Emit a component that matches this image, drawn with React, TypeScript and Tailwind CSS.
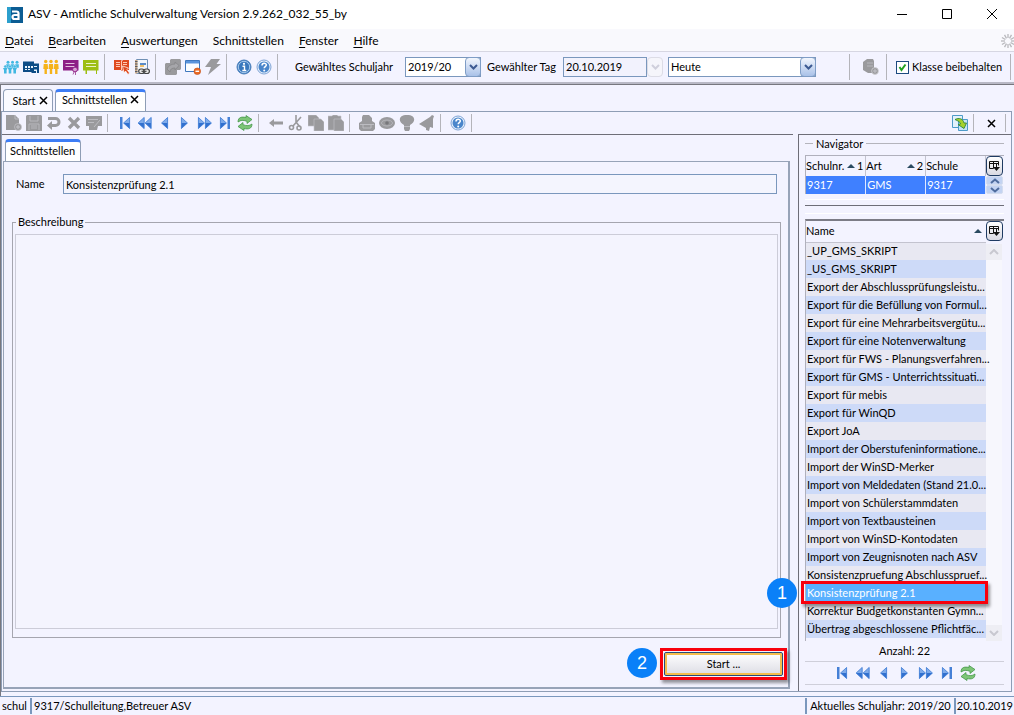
import React, { ReactNode } from 'react';

const GREY = '#9a9a9d';

function Svg({ children, w = 16 }: { children: ReactNode; w?: number }) {
  return (
    <svg width={w} height={16} viewBox={`0 0 ${w} 16`} className="block shrink-0" aria-hidden="true">
      {children}
    </svg>
  );
}

function Tool({ label, children }: { label: string; children: ReactNode }) {
  return (
    <button type="button" aria-label={label} className="block h-4 w-4 shrink-0">
      <Svg>{children}</Svg>
    </button>
  );
}

function Sep({ className = '' }: { className?: string }) {
  return <span className={`w-px shrink-0 self-stretch bg-[#b4b4ba] ${className}`} />;
}

const pupils = (
  <g fill="#42b8e2">
    {[5, 9.5, 14].map((x) => (
      <g key={x}>
        <circle cx={x} cy="3.300" r="1.500" />
        <path d={`M${x - 1.8} 5.300h3.600v3.500h-3.600z`} />
      </g>
    ))}
    {[2.3, 7, 11.7].map((x) => (
      <g key={x}>
        <circle cx={x} cy="7.500" r="1.500" stroke="#f3f3ff" strokeWidth=".4" />
        <path d={`M${x - 2.3} 9h4.600l-1 2v3.500h-2.600V11z`} />
      </g>
    ))}
  </g>
);

const school = (
  <g>
    <path d="M0 2.500h11v2h5v9.500H8.500v-1H0z" fill="#0d4c86" />
    <path d="M2 7h2v2H2zM5 7h2v2H5zM8 7h2v2H8zM11 7h3v1h-3zM2 10h2v1H2zM5 10h2v1H5zM11 10.500h3V14h-1v-2h-2z" fill="#e8f3fb" />
  </g>
);

const teachers = (
  <g fill="#f5b31a">
    {[2.7, 8, 13.3].map((x) => (
      <g key={x}>
        <circle cx={x} cy="2.500" r="1.700" />
        <path d={`M${x - 2} 5h4l.4 5h-1.200v5h-2.400v-5h-1.200z`} />
      </g>
    ))}
  </g>
);

const certificate = (
  <g>
    <path d="M0 1h15.500v10.500H0z" fill="#8d1f86" />
    <path d="M2.500 4.500h9M2.500 7.500h9" stroke="#e3bfe0" />
    <circle cx="12" cy="10.500" r="2.400" fill="#d9a5d5" stroke="#8d1f86" />
    <path d="M11 13l-1 2.500M12.500 13v3" stroke="#a95aa4" />
  </g>
);

const message = (
  <g>
    <path d="M0 1h15.500v10.500H14V15h-1v-3.500H4V15H2.500v-3.500H0z" fill="#9dbe12" />
    <path d="M3 4.500h10M3 7.500h10" stroke="#e9f2c4" />
  </g>
);

const redBook = (
  <g>
    <path d="M0 1h7l1 1 1-1h6v10H9l-1 1-1-1H0z" fill="#df4a20" />
    <path d="M2 3.500h4M2 5.500h4M2 7.500h4M9 3.500h4M9 5.500h4M7.500 2v9" stroke="#ffc8b4" />
    <path d="M8.500 7l6 2-1.500 1.500 2.500 3.500-1.500 1.500-2.500-3.500-1.500 2z" fill="#df4a20" stroke="#fff" strokeWidth=".7" />
  </g>
);

const report = (
  <g>
    <path d="M2.500.5h11v14h-11z" fill="#f2f6fc" stroke="#6f8fb4" />
    <path d="M1 1h2.500v13.500H1z" fill="#c9a98a" />
    <path d="M1 2.500h2.500M1 5h2.500M1 7.500h2.500M1 10h2.500M1 12.500h2.500" stroke="#555b66" />
    <path d="M6 4h6v2H6z" fill="#5a8cc8" />
    <path d="M6 6h4v2H6z" fill="#f1c06a" />
    <rect x="4.700" y="10" width="5.500" height="4.500" rx="2.200" fill="#e8e8e8" stroke="#444" strokeWidth="1.200" />
    <rect x="9.900" y="10" width="5.500" height="4.500" rx="2.200" fill="#e8e8e8" stroke="#444" strokeWidth="1.200" />
    <path d="M7.500 12.300h5" stroke="#444" strokeWidth="1.200" />
  </g>
);

const transferGrey = (
  <g fill={GREY}>
    <path d="M6 0h9l1 1v9l-1 1h-3v4l-1 1H1l-1-1V5l1-1h4V1z" />
    <path d="M2 10l3 3c0-3 2-4 5-4v2l4-4.500L10 3v2C6 5 3 7 2 10z" fill="#a6a6aa" stroke="#858588" strokeWidth=".8" />
  </g>
);

const windowMinus = (
  <g>
    <path d="M.5 1.500h14v11H.5z" fill="#fbfdff" stroke="#3f78be" />
    <path d="M1 2h13v2.500H1z" fill="#5a94dc" />
    <circle cx="12.300" cy="12.300" r="3.300" fill="#ea6a25" stroke="#c14a10" strokeWidth=".6" />
    <path d="M10.500 12.300h3.600" stroke="#fff" strokeWidth="1.400" />
  </g>
);

const bolt = <path d="M6 0h9l-3.500 5H16L3 16l3-8H0z" fill={GREY} />;

const info = (
  <g>
    <circle cx="8" cy="8" r="7" fill="#3a78bd" stroke="#4a7fbb" />
    <circle cx="8" cy="8" r="5.700" fill="none" stroke="#a9cbed" />
    <circle cx="8" cy="4.800" r="1.100" fill="#fff" />
    <path d="M6.500 7.300h2v4M6.300 11.500h4" stroke="#fff" strokeWidth="1.400" fill="none" />
  </g>
);

const help = (
  <g>
    <circle cx="8" cy="8" r="7" fill="#e9f2fc" stroke="#7fa4d6" />
    <circle cx="8" cy="8" r="5.500" fill="#4a86cb" />
    <path d="M6 6.500c0-3 4.300-2.800 4.300-.4C10.300 7.600 8.200 7.600 8.200 9.300" stroke="#fff" strokeWidth="1.500" fill="none" />
    <circle cx="8.200" cy="11.400" r="1" fill="#fff" />
  </g>
);

const docAdd = (
  <g fill={GREY}>
    <path d="M0 0h9l4 4v11H0z" />
    <path d="M9 0v4h4" stroke="#bcbcc1" fill="none" />
    <circle cx="12" cy="12" r="3.500" stroke="#c6c6cc" strokeWidth=".7" />
    <path d="M10 12h4M12 10v4" stroke="#c4c4ca" />
  </g>
);

const floppy = (
  <g>
    <path d="M1 0h14l1 1v15H0V1z" fill={GREY} />
    <path d="M4 1v5h8V1M3 15V9h10v6M5 11h6M5 13h6" stroke="#b8b8bd" fill="none" />
  </g>
);

const undo = (
  <g>
    <path d="M2 3.500h7.500a3.500 3.500 0 0 1 0 7H5" stroke={GREY} strokeWidth="3" fill="none" />
    <path d="M1 10.500L6 6v9z" fill={GREY} />
  </g>
);

const edit = (
  <g>
    <path d="M0 1h16v10h-4l-1 4H3v-4H0z" fill={GREY} />
    <path d="M2 4.500h10M2 7.500h6M8 12l6-7" stroke="#bcbcc1" />
  </g>
);

const triR = (x: number) => (
  <g>
    <path d={`M${x} 2v12l6.500-6z`} fill="#7fabea" />
    <path d={`M${x + 0.5} 8h6L${x + 0.5} 13.500z`} fill="#3170cf" />
    <path d={`M${x + 0.4} 2.500v11l6-5.500z`} fill="none" stroke="#4580d6" strokeWidth=".8" />
  </g>
);
const triL = (x: number) => (
  <g>
    <path d={`M${x} 2v12l-6.500-6z`} fill="#7fabea" />
    <path d={`M${x - 0.5} 8h-6l6 5.500z`} fill="#3170cf" />
    <path d={`M${x - 0.4} 2.500v11l-6-5.500z`} fill="none" stroke="#4580d6" strokeWidth=".8" />
  </g>
);

const refresh = (
  <g fill="#7cc576" stroke="#3b8f41" strokeWidth=".7">
    <path d="M1 7C1 2 5 1.500 9 2.500V.5l6 4-5 4V6.300C6 5 4 5 1 7z" />
    <path d="M15 9c0 5-4 5.500-8 4.500v2l-6-4 5-4v2.200c4 1.300 6 1.300 9-.7z" />
  </g>
);

const navIcons: [string, ReactNode][] = [
  ['Erster', <g><path d="M3 2h2.500v12H3z" fill="#4580d6" />{triL(13)}</g>],
  ['Schnell zurück', <g>{triL(7.500)}{triL(14.500)}</g>],
  ['Zurück', triL(11)],
  ['Weiter', triR(4)],
  ['Schnell vor', <g>{triR(1)}{triR(8)}</g>],
  ['Letzter', <g>{triR(3)}<path d="M10.500 2H13v12h-2.500z" fill="#4580d6" /></g>],
  ['Aktualisieren', refresh],
];

const clipIcons: [string, ReactNode][] = [
  ['Löschen', <path d="M1 8l5-4v2.500h9v3H6V12z" fill={GREY} />],
  ['Ausschneiden', (
    <g fill="none" stroke={GREY} strokeWidth="1.600">
      <path d="M8 0v7l4 5M13 2L5 11" />
      <circle cx="3.500" cy="12.500" r="2" />
      <circle cx="11" cy="13" r="2" />
    </g>
  )],
  ['Kopieren', (
    <g fill={GREY} stroke="#c4c4ca" strokeWidth=".6">
      <path d="M0 0h8l3 3v8H0z" />
      <path d="M6 4h7l3 3v9H6z" />
    </g>
  )],
  ['Einfügen', (
    <g fill={GREY} stroke="#c4c4ca" strokeWidth=".6">
      <path d="M0 1h4l1-1h4l1 1h3v14H0z" />
      <path d="M6 4h7l3 3v9H6z" />
    </g>
  )],
];

const printIcons: [string, ReactNode][] = [
  ['Drucken', (
    <g fill={GREY}>
      <path d="M4 0h6l3 3v3l3 2v6l-2 2H2l-2-2V8l3-2V2z" />
      <path d="M1 9.500h14M4 9v4h8V9" stroke="#bcbcc1" fill="none" />
    </g>
  )],
  ['Vorschau', (
    <g>
      <ellipse cx="8" cy="8" rx="8" ry="6" fill={GREY} />
      <ellipse cx="8" cy="8" rx="5.500" ry="3" fill="none" stroke="#b4b4b9" />
      <circle cx="8" cy="8" r="1.800" fill="#77777a" />
    </g>
  )],
  ['Tipp', (
    <g>
      <path d="M8 0c9 0 9 7 3 10v4l-1 2H6l-1-2v-4C-1 7-1 0 8 0z" fill={GREY} />
      <path d="M5 11.500h6" stroke="#bcbcc1" />
    </g>
  )],
  ['Signal', <path d="M11 2l2-2 2 1-1 3v9l-3-1-1 4-3-1v-2L0 9z" fill={GREY} />],
];

const serverAdd = (
  <g>
    <path d="M0 3l4-3h6l1 2v12H5l-5-3z" fill={GREY} />
    <path d="M4 4h6M4 7h6" stroke="#b7b7bc" />
    <circle cx="12" cy="12" r="3.400" fill={GREY} stroke="#d0d0d6" strokeWidth=".8" />
    <path d="M10 12h4M12 10v4" stroke="#c4c4ca" />
  </g>
);

const syncDocs = (
  <g>
    <path d="M.5.500h10v12H.5z" fill="#e2f1fc" stroke="#4d9bc9" />
    <path d="M6.500 4.500h9v11h-9z" fill="#c5e3f7" stroke="#4d9bc9" />
    <path d="M3 4.500c4-2 8-1 9 3.500h2.500L12 13.500 6 9.500l2.500-.5c0-2-2.500-3-5.500-4.500z" fill="#a5d12c" stroke="#31843b" strokeWidth=".9" />
  </g>
);

function Chevron({ disabled = false }: { disabled?: boolean }) {
  return (
    <span
      className={`pointer-events-none absolute inset-y-0 right-0 flex w-4 items-center justify-center rounded-sm border ${
        disabled ? 'border-[#dcdce6] bg-[#f5f5fb]' : 'border-[#7f9dc6] bg-gradient-to-b from-[#f2f6fd] to-[#a9c1e8]'
      }`}
    >
      <svg width="9" height="6" viewBox="0 0 9 6" aria-hidden="true">
        <path d="M1 1l3.500 3.500L8 1" fill="none" stroke={disabled ? '#cfcfdc' : '#3c5a92'} strokeWidth="2" />
      </svg>
    </span>
  );
}

function Combo({ id, value, className, label }: { id: string; value: string; className: string; label?: string }) {
  return (
    <span className={`relative h-5 shrink-0 ${className}`}>
      <select id={id} aria-label={label} className="block h-5 w-full appearance-none border border-[#7a97bd] bg-white pl-0.5 pr-4">
        <option>{value}</option>
      </select>
      <Chevron />
    </span>
  );
}

function ColumnButton() {
  return (
    <button
      type="button"
      aria-label="Spalten wählen"
      className="flex h-5 w-[17px] shrink-0 items-center justify-center rounded-sm border border-[#1f3b63] bg-gradient-to-b from-white to-[#d9d9e2]"
    >
      <svg width="11" height="12" viewBox="0 0 11 12" aria-hidden="true">
        <path d="M.5 8.500v-7h9v4M.5 8.500h4M.5 3.500h9M4.500 1.500v7M7.500 4v4" fill="none" stroke="#111" />
        <path d="M4 7h7l-3.500 4z" fill="#111" />
      </svg>
    </button>
  );
}

function SortMark({ children }: { children?: ReactNode }) {
  return (
    <span className="ml-auto flex items-center gap-0.5 pr-0.5">
      <svg width="8" height="4" viewBox="0 0 8 4" aria-hidden="true">
        <path d="M0 4l4-4 4 4z" fill="#2a4a60" />
      </svg>
      {children}
    </span>
  );
}

function Badge({ children, className }: { children: ReactNode; className: string }) {
  return (
    <span
      className={`absolute z-10 flex h-[30px] w-[30px] items-center justify-center rounded-full bg-[#0a80f8] font-['Liberation_Sans',sans-serif] text-[18px] text-white ${className}`}
    >
      {children}
    </span>
  );
}

function CloseMark() {
  return (
    <svg width="9" height="9" viewBox="0 0 9 9" aria-hidden="true">
      <path d="M1 1l7 7M8 1L1 8" stroke="#000" strokeWidth="1.500" />
    </svg>
  );
}

const menu = ['Datei', 'Bearbeiten', 'Auswertungen', 'Schnittstellen', 'Fenster', 'Hilfe'];

const entries = [
  '_UP_GMS_SKRIPT',
  '_US_GMS_SKRIPT',
  'Export der Abschlussprüfungsleistu...',
  'Export für die Befüllung von Formul...',
  'Export für eine Mehrarbeitsvergütu...',
  'Export für eine Notenverwaltung',
  'Export für FWS - Planungsverfahren...',
  'Export für GMS - Unterrichtssituati...',
  'Export für mebis',
  'Export für WinQD',
  'Export JoA',
  'Import der Oberstufeninformatione...',
  'Import der WinSD-Merker',
  'Import von Meldedaten (Stand 21.0...',
  'Import von Schülerstammdaten',
  'Import von Textbausteinen',
  'Import von WinSD-Kontodaten',
  'Import von Zeugnisnoten nach ASV',
  'Konsistenzpruefung Abschlusspruef...',
  'Konsistenzprüfung 2.1',
  'Korrektur Budgetkonstanten Gymn...',
  'Übertrag abgeschlossene Pflichtfäc...',
];

function TitleBar() {
  return (
    <header className="flex h-[29px] shrink-0 items-center bg-white pl-[7px]">
      <svg width="16" height="16" viewBox="0 0 16 16" aria-hidden="true">
        <path d="M0 0h16v16H0z" fill="#0b5c93" />
        <path d="M0 0h4v16H0z" fill="#2b9fcd" />
        <path d="M5 4.500h4.500q2 0 2 2V13M11 8H7.500q-2 0-2 2t2 2H11" fill="none" stroke="#fff" strokeWidth="2.200" />
      </svg>
      <h1 className="ml-[5px] pb-0.5 text-[12px]">ASV - Amtliche Schulverwaltung Version 2.9.262_032_55_by</h1>
      <div className="ml-auto flex pb-px">
        {[
          ['Minimieren', 'M0 5.500h10'],
          ['Maximieren', 'M.5.500h9v9h-9z'],
          ['Schließen', 'M0 0l10 10M10 0L0 10'],
        ].map(([label, d]) => (
          <button key={label} type="button" aria-label={label} className="flex h-7 w-[45px] items-center justify-center">
            <svg width="10" height="10" viewBox="0 0 10 10" aria-hidden="true">
              <path d={d} fill="none" stroke="#000" />
            </svg>
          </button>
        ))}
      </div>
    </header>
  );
}

function MenuBar() {
  return (
    <nav className="flex h-[23px] shrink-0 items-center gap-[15px] border-b border-[#d6d6e2] bg-[#f9f9fd] pl-[5px] pt-0.5 text-[12px]">
      {menu.map((m) => (
        <button key={m} type="button" className="leading-4">
          {m === 'Schnittstellen' ? m : (
            <>
              <span className="underline underline-offset-2">{m[0]}</span>
              {m.slice(1)}
            </>
          )}
        </button>
      ))}
      <svg width="14" height="16" viewBox="0 0 14 16" className="ml-auto" aria-hidden="true">
        {[0, 30, 60, 90, 120, 150, 180, 210, 240, 270, 300, 330].map((a) => (
          <path key={a} d="M8 1v4" stroke="#b9b9bd" strokeWidth="1.300" transform={`rotate(${a} 8 8)`} />
        ))}
      </svg>
    </nav>
  );
}

function MainToolbar() {
  return (
    <div className="flex h-8 shrink-0 items-center border-b-2 border-[#b9b9c6] py-0.5">
      <div className="flex gap-1 pl-[3px]">
        <Tool label="Schüler">{pupils}</Tool>
        <Tool label="Schule">{school}</Tool>
        <Tool label="Lehrkräfte">{teachers}</Tool>
        <Tool label="Zeugnisse">{certificate}</Tool>
        <Tool label="Nachrichten">{message}</Tool>
      </div>
      <Sep className="ml-[5px] mr-[9px]" />
      <div className="flex gap-1">
        <Tool label="Klassenbuch">{redBook}</Tool>
        <Tool label="Berichte">{report}</Tool>
      </div>
      <Sep className="ml-[5px] mr-[9px]" />
      <div className="flex gap-1">
        <Tool label="Übertragen">{transferGrey}</Tool>
        <Tool label="Fenster schließen">{windowMinus}</Tool>
        <Tool label="Aktion">{bolt}</Tool>
      </div>
      <Sep className="ml-[5px] mr-[9px]" />
      <div className="flex gap-1">
        <Tool label="Info">{info}</Tool>
        <Tool label="Hilfe">{help}</Tool>
      </div>
      <Sep className="ml-[5px]" />
      <label htmlFor="year" className="ml-[17px] w-[110px] shrink-0 whitespace-nowrap">Gewähltes Schuljahr</label>
      <Combo id="year" value="2019/20" className="w-[76px]" />
      <label htmlFor="day" className="ml-1.5 w-[76px] shrink-0 whitespace-nowrap">Gewählter Tag</label>
      <span className="relative h-5 w-[100px] shrink-0">
        <input id="day" readOnly defaultValue="20.10.2019" className="block h-5 w-[84px] border border-[#7a97bd] bg-[#f2f2fd] px-0.5 pb-0.5" />
        <Chevron disabled />
      </span>
      <Combo id="span" label="Zeitraum" value="Heute" className="ml-[5px] w-[148px]" />
      <span className="ml-auto" />
      <Sep className="mr-[13px]" />
      <Tool label="Server">{serverAdd}</Tool>
      <Sep className="ml-[7px] mr-[9px]" />
      <label className="flex w-[110px] items-center gap-[3px] whitespace-nowrap">
        <span className="relative block h-[13px] w-[13px]">
          <input type="checkbox" defaultChecked className="block h-[13px] w-[13px] appearance-none border border-[#1c4a80] bg-white" />
          <svg width="13" height="13" viewBox="0 0 13 13" className="pointer-events-none absolute inset-0" aria-hidden="true">
            <path d="M3.500 6l2 3 4-5.500" fill="none" stroke="#21a121" strokeWidth="2" />
          </svg>
        </span>
        Klasse beibehalten
      </label>
      <Sep className="ml-1 mr-[3px]" />
    </div>
  );
}

function ViewToolbar() {
  return (
    <div className="flex h-[22px] shrink-0 items-center py-0.5">
      <div className="flex gap-1 pl-1">
        <Tool label="Neu">{docAdd}</Tool>
        <Tool label="Speichern">{floppy}</Tool>
        <Tool label="Rückgängig">{undo}</Tool>
        <Tool label="Verwerfen"><path d="M3 3l10 10M13 3L3 13" stroke={GREY} strokeWidth="3.400" /></Tool>
        <Tool label="Bearbeiten">{edit}</Tool>
      </div>
      <Sep className="ml-[5px] mr-[9px]" />
      <div className="flex gap-1">
        {navIcons.map(([l, i]) => <Tool key={l} label={l}>{i}</Tool>)}
      </div>
      <Sep className="ml-[5px] mr-[9px]" />
      <div className="flex gap-1">
        {clipIcons.map(([l, i]) => <Tool key={l} label={l}>{i}</Tool>)}
      </div>
      <Sep className="ml-[5px] mr-[9px]" />
      <div className="flex gap-1">
        {printIcons.map(([l, i]) => <Tool key={l} label={l}>{i}</Tool>)}
      </div>
      <Sep className="ml-[5px] mr-[9px]" />
      <Tool label="Hilfe zur Ansicht">{help}</Tool>
      <Sep className="ml-[5px]" />
      <span className="ml-auto" />
      <Tool label="Synchronisieren">{syncDocs}</Tool>
      <Sep className="ml-[5px] mr-[13px]" />
      <button type="button" aria-label="Ansicht schließen"><CloseMark /></button>
      <Sep className="ml-[9px] mr-[5px]" />
    </div>
  );
}

function Details() {
  return (
    <main className="flex min-w-0 flex-1 flex-col border-t border-[#6e6e78] pt-1">
      <div role="tablist" className="flex pl-[3px]">
        <button
          type="button"
          role="tab"
          aria-selected="true"
          className="h-[22px] w-[76px] whitespace-nowrap rounded-t-sm border-x border-t-[3px] border-x-[#8e9db5] border-t-[#3d7df5] bg-white pb-0.5 pl-1 text-left"
        >
          Schnittstellen
        </button>
      </div>
      <form className="mb-0.5 ml-px mr-[3px] flex flex-1 flex-col border border-b-2 border-r-2 border-[#97a3b8] pb-[7px]">
        <div className="mr-[11px] mt-3 flex items-center pl-3">
          <label htmlFor="name" className="w-[47px] shrink-0">Name</label>
          <input id="name" defaultValue="Konsistenzprüfung 2.1" className="h-5 min-w-0 flex-1 border border-[#7a97bd] bg-[#f4f5fe] px-0.5" />
        </div>
        <fieldset className="ml-2 mr-[7px] mt-5 flex min-w-0 flex-1 flex-col border border-[#a5a5af] px-0.5 pb-2">
          <legend className="ml-px px-0.5 leading-4">
            <label htmlFor="description">Beschreibung</label>
          </legend>
          <textarea id="description" className="mt-1 block w-full flex-1 resize-none border border-[#ccccd8] bg-[#f4f4fe]" />
        </fieldset>
        <div className="mt-2.5 flex justify-end pr-px">
          <div className="relative border-[3px] border-[#f8000c] p-px shadow-[2px_3px_3px_rgba(0,0,0,0.4)]">
            <Badge className="-left-9 top-[-3px]">2</Badge>
            <button
              type="button"
              className="block h-6 w-[119px] rounded-xs border border-[#274a78] bg-gradient-to-b from-white to-[#dcdce4] shadow-[inset_0_0_0_2px_#f6bd4c]"
            >
              Start ...
            </button>
          </div>
        </div>
      </form>
    </main>
  );
}

function Navigator() {
  return (
    <aside className="ml-[5px] flex w-[213px] shrink-0 flex-col border-l border-t border-[#6e6e78] pl-1.5 pr-[7px]">
      <h2 className="flex h-[17px] items-center gap-[3px]">
        <span className="h-px w-2 bg-[#b4b4bc]" />
        Navigator
        <span className="h-px flex-1 bg-[#b4b4bc]" />
      </h2>
      <div className="mt-[3px] flex border-l border-t border-[#b0b0bc]">
        <table className="w-full flex-1 table-fixed border-collapse">
          <thead>
            <tr className="h-5">
              {[['Schulnr.', '1'], ['Art', '2'], ['Schule', '']].map(([h, n]) => (
                <th key={h} scope="col" className="border-r border-[#c3c3cf] p-0 text-left font-normal">
                  <span className="flex items-center">{h}{n && <SortMark>{n}</SortMark>}</span>
                </th>
              ))}
            </tr>
          </thead>
          <tbody>
            <tr className="h-[18px] bg-[#3f80ff] text-white">
              {['9317', 'GMS', '9317'].map((v, i) => (
                <td key={i} className="border-r border-[#dfe8ff] p-0 pl-px">{v}</td>
              ))}
            </tr>
          </tbody>
        </table>
        <div className="flex w-[18px] shrink-0 flex-col items-start">
          <ColumnButton />
          {['M1 5l4-3.500L9 5', 'M1 1l4 3.500L9 1'].map((d) => (
            <button key={d} type="button" aria-label="Blättern" className="flex h-[9px] w-[17px] items-center justify-center rounded-xs border border-[#d4ddef] bg-[#c3d3f2]">
              <svg width="10" height="6" viewBox="0 0 10 6" className="shrink-0" aria-hidden="true">
                <path d={d} fill="none" stroke="#4f6c9e" strokeWidth="2" />
              </svg>
            </button>
          ))}
        </div>
      </div>
      <div className="mt-[5px] border-t border-white pt-[5px]">
        <div className="border-t border-[#6e6e78]" />
      </div>
      <div className="mt-[7px] flex min-h-0 flex-1 flex-col border-t border-white pt-[5px]">
        <div className="flex min-h-0 min-w-0 flex-1 border-l border-t-2 border-l-[#b0b0bc] border-t-[#7c7c86]">
          <table className="h-max w-full flex-1 table-fixed border-collapse">
            <thead>
              <tr className="h-[21px] border-b border-[#c3c3cf]">
                <th scope="col" className="p-0 pr-0.5 text-left font-normal">
                  <span className="flex items-center">Name<SortMark /></span>
                </th>
              </tr>
            </thead>
            <tbody>
              {entries.map((e, i) => (
                <tr
                  key={e}
                  className={`h-[18px] ${i === 19 ? 'bg-[#59b0ff] text-white' : i % 2 ? 'bg-[#cddaf8]' : 'bg-[#e8e8f2]'}`}
                >
                  <td className="relative p-0 pl-px leading-4 whitespace-nowrap">
                    {e}
                    {i === 19 && (
                      <>
                        <span className="absolute -bottom-0.5 -left-[5px] -right-0.5 -top-[3px] border-[3px] border-[#f8000c] shadow-[2px_3px_3px_rgba(0,0,0,0.4)]" />
                        <Badge className="-left-[39px] -top-1.5">1</Badge>
                      </>
                    )}
                  </td>
                </tr>
              ))}
            </tbody>
          </table>
          <div className="flex w-[18px] shrink-0 flex-col items-start">
            <ColumnButton />
            <div className="mt-[3px] flex w-4 flex-1 flex-col justify-between bg-[#f7f7fd]">
              {['M1 5l4-4 4 4', 'M1 1l4 4 4-4'].map((d) => (
                <button key={d} type="button" aria-label="Scrollen" className="flex h-4 w-4 items-center justify-center bg-[#eeeef4]">
                  <svg width="10" height="6" viewBox="0 0 10 6" aria-hidden="true">
                    <path d={d} fill="none" stroke="#c8c8d0" strokeWidth="2" />
                  </svg>
                </button>
              ))}
            </div>
          </div>
        </div>
      </div>
      <p className="flex h-5 items-center justify-center">Anzahl: 22</p>
      <div className="mb-1.5 flex h-6 items-center justify-center gap-[5px] border-y border-[#cfcfda]">
        {navIcons.map(([l, i]) => <Tool key={l} label={l}>{i}</Tool>)}
      </div>
    </aside>
  );
}

export default function App() {
  return (
    <div className="flex h-screen flex-col overflow-hidden bg-[#f3f3ff] font-['Lato','Noto_Sans',sans-serif] text-[11px] leading-4 text-black">
      <TitleBar />
      <MenuBar />
      <MainToolbar />
      <div className="flex min-h-0 flex-1 flex-col border-l border-t border-[#77777f] pt-1">
        <div role="tablist" className="flex gap-0.5 pl-0.5">
          <button type="button" role="tab" aria-selected="false" className="flex h-[22px] w-[50px] items-center justify-center gap-[3px] rounded-t-sm border border-b-0 border-[#8e9db5] bg-[#fafaff] pl-1">
            Start <CloseMark />
          </button>
          <button type="button" role="tab" aria-selected="true" className="flex h-[22px] w-[91px] items-center justify-center gap-[3px] whitespace-nowrap rounded-t-sm border-x border-t-[3px] border-x-[#8e9db5] border-t-[#3d7df5] bg-white pb-1">
            Schnittstellen <CloseMark />
          </button>
        </div>
        <div className="mb-1 mr-0.5 flex min-h-0 flex-1 flex-col border border-[#8e9db5]">
          <ViewToolbar />
          <div className="flex min-h-0 flex-1">
            <Details />
            <Navigator />
          </div>
        </div>
      </div>
      <footer className="flex h-[19px] shrink-0 items-center border-t border-[#7a97bd] whitespace-nowrap">
        <span className="w-8 shrink-0 border-r-2 border-[#7a97bd] pl-0.5">schul</span>
        <span className="flex-1 pl-0.5">9317/Schulleitung,Betreuer ASV</span>
        <span className="shrink-0 border-l-2 border-[#7a97bd] px-[3px]">Aktuelles Schuljahr: 2019/20</span>
        <span className="shrink-0 border-l-2 border-[#7a97bd] px-px">20.10.2019</span>
      </footer>
    </div>
  );
}
